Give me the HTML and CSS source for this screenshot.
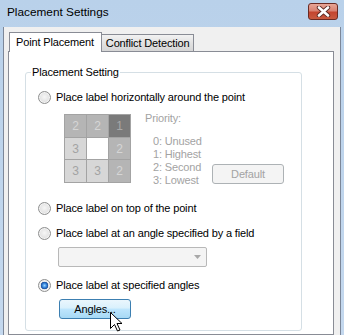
FILE: index.html
```html
<!DOCTYPE html>
<html lang="en">
<head>
  <meta charset="UTF-8">
  <title>Placement Settings</title>
  <link rel="stylesheet" href="styles.css">
</head>
<body>

<div class="window">
  <div class="titlebar">
    <span class="title">Placement Settings</span>
    <div class="close-btn">
      <svg width="15" height="11" viewBox="0 0 15 11">
        <path d="M3 1.5 L12 9.5 M12 1.5 L3 9.5" stroke="#5a2a24" stroke-width="4.4" stroke-linecap="round"/>
        <path d="M3 1.5 L12 9.5 M12 1.5 L3 9.5" stroke="#fff" stroke-width="2.6" stroke-linecap="round"/>
      </svg>
    </div>
  </div>

  <div class="client">
    <div class="tabs">
      <div class="tab active">Point Placement</div>
      <div class="tab">Conflict Detection</div>
    </div>

    <div class="tab-page">
      <div class="group">
        <div class="group-title">Placement Setting</div>

        <label class="option"><span class="radio"></span>Place label horizontally around the point</label>

        <div class="priority">
          <div class="priority-grid">
            <div class="cell p2">2</div>
            <div class="cell p2">2</div>
            <div class="cell p1">1</div>
            <div class="cell p3">3</div>
            <div class="cell p0"></div>
            <div class="cell p2">2</div>
            <div class="cell p3">3</div>
            <div class="cell p3">3</div>
            <div class="cell p2">2</div>
          </div>
          <div class="priority-info">
            <div>Priority:</div>
            <div class="priority-list">
              <div>0: Unused</div>
              <div>1: Highest</div>
              <div>2: Second</div>
              <div>3: Lowest</div>
            </div>
          </div>
          <button class="btn btn-default" disabled>Default</button>
        </div>

        <label class="option row2"><span class="radio"></span>Place label on top of the point</label>
        <label class="option row3"><span class="radio"></span>Place label at an angle specified by a field</label>

        <div class="combo">
          <svg width="7" height="4" viewBox="0 0 7 4"><path d="M0 0 H7 L3.5 4 Z" fill="#a8a8a8"/></svg>
        </div>

        <label class="option row3"><span class="radio checked"></span>Place label at specified angles</label>

        <div class="angles-wrap">
          <button class="btn btn-angles">Angles...</button>
          <svg class="cursor" width="13" height="20" viewBox="0 0 13 20">
            <path d="M0.5 0.5 L0.5 16.5 L4.5 12.5 L7.5 19 L10 18 L7 11.5 L12 11.5 Z" fill="#fff" stroke="#000" stroke-width="1" stroke-linejoin="miter"/>
          </svg>
        </div>
      </div>
    </div>
  </div>
</div>

</body>
</html>
```

FILE: styles.css
```css
body {
  margin: 0;
  width: 344px;
  height: 335px;
  overflow: hidden;
  font-family: 'Liberation Sans', Arial, sans-serif;
  font-size: 11px;
  letter-spacing: -0.15px;
  color: #000;
  background: linear-gradient(#b9d1ea, #c4d8ee);
}

.window {
  display: flex;
  flex-direction: column;
  height: 335px;
}

.titlebar {
  height: 27px;
  display: flex;
  align-items: center;
  justify-content: space-between;
  padding-left: 7px;
  box-sizing: border-box;
}

.title {
  font-size: 11.8px;
  letter-spacing: 0;
  margin-top: -3px;
}

.close-btn {
  width: 30px;
  height: 17px;
  margin: -5px 6px 0 0;
  box-sizing: border-box;
  border: 1px solid #6b2a22;
  border-radius: 3px;
  background: linear-gradient(#e8a596 0%, #d88272 45%, #c4452f 55%, #c85a40 100%);
  display: flex;
  align-items: center;
  justify-content: center;
}

.client {
  flex: 1;
  margin: 0 3px;
  border-left: 1px solid #7c8799;
  border-right: 1px solid #7c8799;
  background: #f0f0f0;
  padding: 5px 0 0 4px;
  display: flex;
  flex-direction: column;
}

.tabs {
  display: flex;
  align-items: flex-end;
  height: 19px;
}

.tab {
  height: 17px;
  box-sizing: border-box;
  border: 1px solid #898c95;
  border-bottom: none;
  padding: 0 4px;
  line-height: 16px;
  background: linear-gradient(#f2f2f2, #e2e2e2 50%, #d6d6d6);
  white-space: nowrap;
}

.tab.active {
  height: 20px;
  margin: 0 -1px -1px 1px;
  padding: 0 7px 0 6px;
  line-height: 18px;
  background: #fff;
  position: relative;
  z-index: 1;
}

.tab-page {
  flex: 1;
  width: 326px;
  box-sizing: border-box;
  border: 1px solid #898c95;
  background: #fff;
}

.group {
  width: 277px;
  box-sizing: border-box;
  margin: 20px 0 0 16px;
  padding-bottom: 11px;
  border: 1px solid #d5dfe5;
  border-radius: 3px;
  display: flex;
  flex-direction: column;
  align-items: flex-start;
}

.group-title {
  margin: -7px 0 0 5px;
  padding: 0 1px;
  line-height: 13px;
  background: #fff;
}

.option {
  display: flex;
  align-items: center;
  height: 14px;
  margin: 11px 0 0 12px;
  white-space: nowrap;
}

.option.row2 {
  margin-top: 17px;
}

.radio {
  width: 13px;
  height: 13px;
  box-sizing: border-box;
  margin-right: 5px;
  border-radius: 50%;
  border: 1px solid #8e8f8f;
  background: radial-gradient(circle at 50% 45%, #f6f6f6 0%, #e4e4e4 55%, #c9c9c9 100%);
  box-shadow: inset 0 0 0 1px #f4f4f4;
}

.radio.checked {
  background: radial-gradient(circle, #9cd6ff 0%, #3b8be0 25%, #1a4f9c 45%, #e8e8e8 52%, #dcdcdc 100%);
}

.priority {
  display: flex;
  align-items: flex-start;
  height: 70px;
  margin: 10px 0 0 38px;
}

.priority-grid {
  display: grid;
  grid-template-columns: 21px 21px 21px;
  grid-template-rows: 22px 21px 22px;
  gap: 1px;
  padding: 1px;
  background: #a3a3a3;
}

.cell {
  display: flex;
  align-items: center;
  justify-content: center;
  font-size: 12px;
}

.cell.p0 { background: #fff; }
.cell.p1 { background: #7a7a7a; color: #a8a8a8; }
.cell.p2 { background: #b5b5b5; color: #d6d6d6; }
.cell.p3 { background: #d7d7d7; color: #a3a3a3; }

.priority-info {
  width: 67px;
  margin: -2px 0 0 14px;
  line-height: 13px;
  color: #a3a3a3;
  white-space: nowrap;
}

.priority-list {
  margin-top: 10px;
  padding-left: 8px;
}

.btn {
  font-family: inherit;
  font-size: 11px;
  letter-spacing: inherit;
  height: 20px;
  width: 72px;
  padding: 0;
  box-sizing: border-box;
  border-radius: 3px;
}

.btn-default {
  margin-top: 50px;
  border: 1px solid #adb2b5;
  background: #f4f4f4;
  color: #a3a3a3;
}

.combo {
  width: 149px;
  height: 20px;
  box-sizing: border-box;
  margin: 7px 0 0 32px;
  border: 1px solid #b8b8b8;
  border-radius: 2px;
  background: #f4f4f4;
  display: flex;
  align-items: center;
  justify-content: flex-end;
  padding-right: 5px;
}

.angles-wrap {
  position: relative;
  margin: 7px 0 0 33px;
}

.btn-angles {
  display: block;
  border: 1px solid #3c7fb1;
  background: linear-gradient(#eaf6fd 0%, #d9f0fc 45%, #bee6fd 50%, #a7d9f5 100%);
  color: #000;
}

.cursor {
  position: absolute;
  left: 51px;
  top: 13px;
}
```
